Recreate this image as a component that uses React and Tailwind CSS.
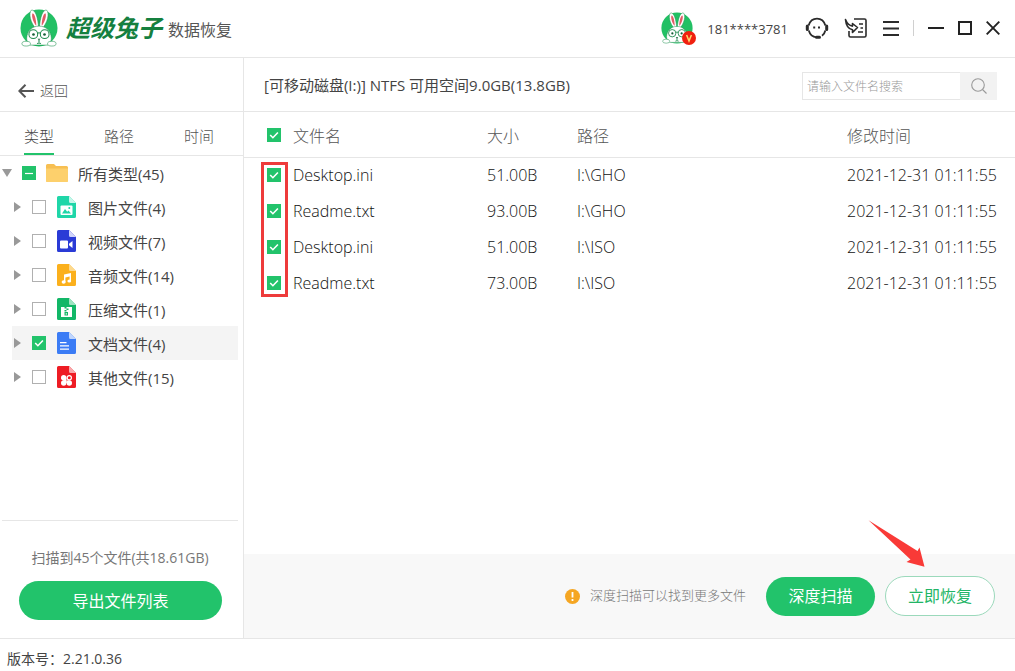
import { useEffect, useRef, useState } from "react";

const TYPES = [
  { id: "image", label: "图片文件(4)", color: "#1fd6a8", fold: "#c5f7ea" },
  { id: "video", label: "视频文件(7)", color: "#2a3bd6", fold: "#d0d4fa" },
  { id: "audio", label: "音频文件(14)", color: "#fbb01c", fold: "#fdd98d" },
  { id: "zip", label: "压缩文件(1)", color: "#12b767", fold: "#9fe3c1" },
  { id: "doc", label: "文档文件(4)", color: "#3b7cf5", fold: "#c0d6fd", checked: true },
  { id: "other", label: "其他文件(15)", color: "#ee1c24", fold: "#f9a9ac" },
];

const FILES = [
  { name: "Desktop.ini", size: "51.00B", path: "I:\\GHO", time: "2021-12-31 01:11:55" },
  { name: "Readme.txt", size: "93.00B", path: "I:\\GHO", time: "2021-12-31 01:11:55" },
  { name: "Desktop.ini", size: "51.00B", path: "I:\\ISO", time: "2021-12-31 01:11:55" },
  { name: "Readme.txt", size: "73.00B", path: "I:\\ISO", time: "2021-12-31 01:11:55" },
];

function Checkbox({ id, label, defaultChecked = false, mixed = false }) {
  const ref = useRef(null);
  useEffect(() => {
    if (ref.current) ref.current.indeterminate = mixed;
  }, [mixed]);
  return (
    <span className="grid size-[14px] shrink-0">
      <input
        ref={ref}
        id={id}
        type="checkbox"
        aria-label={label}
        defaultChecked={defaultChecked}
        className="peer col-start-1 row-start-1 m-0 size-[14px] appearance-none border border-[#b0b0b0] bg-white checked:border-[#22c36b] checked:bg-[#22c36b] indeterminate:border-[#22c36b] indeterminate:bg-[#22c36b]"
      />
      <svg
        viewBox="0 0 14 14"
        fill="none"
        stroke="#fff"
        strokeWidth="1.6"
        className={
          mixed
            ? "pointer-events-none col-start-1 row-start-1 size-[14px]"
            : "pointer-events-none invisible col-start-1 row-start-1 size-[14px] peer-checked:visible"
        }
      >
        {mixed ? <path d="M3 7.5h8" strokeWidth="1.2" /> : <path d="M3.2 7l2.7 2.7 5-5.2" />}
      </svg>
    </span>
  );
}

function Rabbit({ className }) {
  return (
    <svg viewBox="0 0 40 40" className={className} aria-hidden="true">
      <circle cx="20" cy="20" r="19.500" fill="#22c064" />
      <g stroke="#1a8f4c" strokeWidth=".6" fill="#fff">
        <path d="M17 21C11 15 8.500 4 12 1.200C16 .2 19 9 19.600 20z" />
        <path d="M23 21c6-6 8.500-17 5-19.800C24 .2 21 9 20.400 20z" />
        <path d="M20 18c8 0 12.500 5.500 13 12.500.2 3-1 5-3.500 7.500h-19C8 35.500 6.800 33.500 7 30.500 7.500 23.500 12 18 20 18z" />
        <ellipse cx="6.500" cy="36.500" rx="4.500" ry="2.500" />
        <ellipse cx="33.500" cy="36.500" rx="4.500" ry="2.500" />
      </g>
      <path d="M16.500 17C13 12 12 6 13.300 4.500 15.500 5 17 11 17.200 17zM23.500 17C27 12 28 6 26.700 4.500 24.500 5 23 11 22.800 17z" fill="#e25b66" />
      <g fill="none" stroke="#1f8b4d" strokeWidth="1.100">
        <circle cx="14" cy="26.500" r="4.600" />
        <circle cx="26" cy="26.500" r="4.600" />
        <path d="M18.600 25.500q1.400-1 2.800 0M20 32.500v2.500M18 36.500q2-1.500 4 0" />
      </g>
      <g fill="#175f37">
        <circle cx="14.200" cy="26.800" r="1.400" />
        <circle cx="25.800" cy="26.800" r="1.400" />
        <path d="M18.500 31.300h3L20 33z" />
      </g>
    </svg>
  );
}

function FileIcon({ type }) {
  return (
    <svg viewBox="0 0 19 22" className="h-[22px] w-[19px] shrink-0" aria-hidden="true">
      <path d="M1.500 0H12l7 7v13.500a1.500 1.500 0 0 1-1.500 1.500h-16A1.500 1.500 0 0 1 0 20.500v-19A1.500 1.500 0 0 1 1.500 0z" fill={type.color} />
      <path d="M12 0l7 7h-5.500A1.500 1.500 0 0 1 12 5.500z" fill={type.fold} />
      {type.id === "image" && (
        <>
          <rect x="3.500" y="9.500" width="12" height="9.500" rx="1" fill="#fff" />
          <path d="M5 17.500l3-4.500 2.200 2.800 1.300-1.300 2.500 3z" fill={type.color} />
          <circle cx="12.300" cy="12" r="1" fill={type.color} />
        </>
      )}
      {type.id === "video" && (
        <path d="M4 10.500h6a1 1 0 0 1 1 1v6a1 1 0 0 1-1 1H4a1 1 0 0 1-1-1v-6a1 1 0 0 1 1-1zM12 13.700l3.500-2.700v7L12 15.300z" fill="#fff" />
      )}
      {type.id === "audio" && (
        <g fill="#fff">
          <path d="M7 10.600l7-1.600v8h-1.400v-4.400l-4.200 1v5H7z" />
          <ellipse cx="6.600" cy="18" rx="2" ry="1.700" />
          <ellipse cx="12.300" cy="17" rx="1.900" ry="1.600" />
        </g>
      )}
      {type.id === "zip" && (
        <>
          <path d="M4 9h11v10H4z" fill="#fff" />
          <path d="M7.500 9h2v1.500h-2zM9.500 10.500h2V12h-2zM7.500 12h2v1.500h-2zM7.500 14h3.500v3.500H7.500z" fill={type.color} />
          <path d="M8.700 15.200h1.200v1.200H8.700z" fill="#fff" />
        </>
      )}
      {type.id === "doc" && <path d="M3 10.700h6.500M3 13.900h9M3 17.100h9" stroke="#fff" strokeWidth="1.300" />}
      {type.id === "other" && (
        <g fill="#fff">
          <circle cx="6.700" cy="11.800" r="2.700" />
          <circle cx="6.700" cy="17" r="2.700" />
          <circle cx="12.300" cy="17" r="2.700" />
          <path d="M6.500 11.500h2.900v2.900H6.500zM6.500 14.400h2.900v2.600H6.500zM9.600 14.400h2.900v2.600H9.600z" />
          <circle cx="12.300" cy="11.700" r="2.100" fill="none" stroke="#fff" strokeWidth="1.200" />
        </g>
      )}
    </svg>
  );
}

function Header() {
  return (
    <header className="flex h-[58px] shrink-0 items-center border-b border-[#e6e6e6] pr-[15px] pb-[2px] pl-5">
      <Rabbit className="size-[38px]" />
      <h1 className="ml-2 flex items-center">
        <span className="text-[24px] font-bold text-[#15803f] italic">超级兔子</span>
        <span className="ml-[6px] pt-1 text-[16px] font-normal text-[#555]">数据恢复</span>
      </h1>
      <div className="ml-auto flex items-center">
        <div className="relative mr-[14px]">
          <Rabbit className="size-[32px]" />
          <svg viewBox="0 0 14 14" className="absolute top-[19px] left-[21px] size-[14px]" aria-label="VIP">
            <circle cx="7" cy="7" r="7" fill="#f0200f" />
            <path d="M4.600 4l2.400 6 2.400-6" fill="none" stroke="#ffd76a" strokeWidth="1.500" />
          </svg>
        </div>
        <span className="mr-[17px] pt-[4px] text-[13px] font-normal text-[#444]">181****3781</span>
        <button type="button" aria-label="客服" className="mr-[15px]">
          <svg viewBox="0 0 24 24" className="size-6" fill="none" stroke="#2b2b2b" strokeWidth="1.800">
            <path d="M3.600 9.500C5 5 8 2.700 12 2.700S19 5 20.400 9.500M3.800 14.500C5 18.800 7.500 21 11.500 21.300M20.300 14.500C19.800 17 18.500 18.800 17 19.800" />
            <path d="M2.300 10v3.500M21.700 10v3.500M11.500 21.300h3" strokeWidth="3" strokeLinecap="round" />
            <path d="M8.200 11.500h2M13 11.500h2" strokeWidth="2.200" />
          </svg>
        </button>
        <button type="button" aria-label="反馈" className="mr-[15px]">
          <svg viewBox="0 0 24 24" className="size-6" fill="none" stroke="#2b2b2b" strokeWidth="1.600" strokeLinejoin="round">
            <path d="M10 3h10.500A1.500 1.500 0 0 1 22 4.500v15a1.500 1.500 0 0 1-1.500 1.500H6.500A1.500 1.500 0 0 1 5 19.500V15" />
            <path d="M1.500 3.500c.5 6 2.500 9.500 7 10.300V16.500l5-5-5-4v2.600C5 9.500 3 7.500 1.500 3.500z" />
            <path d="M15 8h4M16.500 12H19M14 16h5" />
          </svg>
        </button>
        <button type="button" aria-label="菜单" className="mr-[14px]">
          <svg viewBox="0 0 16 16" className="size-4" stroke="#2b2b2b" strokeWidth="1.800">
            <path d="M0 2h16M0 8.500h16M0 15h16" />
          </svg>
        </button>
        <span className="mr-[14px] h-4 w-px bg-[#d0d0d0]" />
        <button type="button" aria-label="最小化" className="mr-[14px]">
          <svg viewBox="0 0 16 16" className="size-4" stroke="#222" strokeWidth="2">
            <path d="M0 8h16" />
          </svg>
        </button>
        <button type="button" aria-label="最大化" className="mr-[14px]">
          <svg viewBox="0 0 14 14" className="size-[14px]" fill="none" stroke="#222" strokeWidth="2">
            <path d="M1 1h12v12H1z" />
          </svg>
        </button>
        <button type="button" aria-label="关闭">
          <svg viewBox="0 0 14 14" className="size-[14px]" stroke="#222" strokeWidth="1.900">
            <path d="M.7.700l12.600 12.600M13.300.7L.7 13.300" />
          </svg>
        </button>
      </div>
    </header>
  );
}

function Sidebar() {
  const [tab, setTab] = useState("类型");
  return (
    <aside className="flex w-[244px] shrink-0 flex-col border-r border-[#e6e6e6]">
      <div className="flex h-[54px] items-center border-b border-[#e6e6e6] pt-3 pl-[18px]">
        <button type="button" className="flex items-center gap-[6px] text-[14px] text-[#555]">
          <svg viewBox="0 0 16 14" className="h-[14px] w-4" fill="none" stroke="#555" strokeWidth="2">
            <path d="M16 7H1.500M7.500.7L1.300 7l6.200 6.300" />
          </svg>
          返回
        </button>
      </div>
      <div role="tablist" className="flex h-[44px] gap-[50px] border-b border-[#e6e6e6] pl-6">
        {["类型", "路径", "时间"].map((name) => (
          <button
            key={name}
            type="button"
            role="tab"
            aria-selected={tab === name}
            onClick={() => setTab(name)}
            className={
              tab === name
                ? "border-b-2 border-[#22c36b] pt-[7px] text-[15px] text-[#444]"
                : "border-b-2 border-transparent pt-[7px] text-[15px] text-[#555]"
            }
          >
            {name}
          </button>
        ))}
      </div>
      <div className="text-[15px] font-normal text-[#444]">
        <div className="flex h-[34px] items-center pl-[2px]">
          <svg viewBox="0 0 10 8" className="mr-[10px] h-2 w-[10px]" fill="#999" aria-hidden="true">
            <path d="M0 0h10L5 8z" />
          </svg>
          <Checkbox id="type-all" mixed />
          <svg viewBox="0 0 22 18" className="mr-[10px] ml-[10px] h-[18px] w-[22px]" aria-hidden="true">
            <path d="M1.500 0H8l2 2h10.500A1.500 1.500 0 0 1 22 3.500v13a1.500 1.500 0 0 1-1.500 1.500h-19A1.500 1.500 0 0 1 0 16.500v-15A1.500 1.500 0 0 1 1.500 0z" fill="#f7bf52" />
            <path d="M0 4.500h22v12a1.500 1.500 0 0 1-1.500 1.500h-19A1.500 1.500 0 0 1 0 16.500z" fill="#fdd06c" />
          </svg>
          <label htmlFor="type-all" className="pt-[2px]">
            所有类型(45)
          </label>
        </div>
        <ul className="mr-[5px] ml-3">
          {TYPES.map((t) => (
            <li key={t.id} className={t.checked ? "flex h-[34px] items-center bg-[#f4f4f4] pl-[2px]" : "flex h-[34px] items-center pl-[2px]"}>
              <svg viewBox="0 0 7 10" className="mr-[11px] h-[10px] w-[7px]" fill="#999" aria-hidden="true">
                <path d="M0 0l7 5-7 5z" />
              </svg>
              <Checkbox id={"type-" + t.id} defaultChecked={Boolean(t.checked)} />
              <span className="mr-3 ml-[11px]">
                <FileIcon type={t} />
              </span>
              <label htmlFor={"type-" + t.id} className="pt-[2px]">
                {t.label}
              </label>
            </li>
          ))}
        </ul>
      </div>
      <div className="mt-auto mr-[5px] ml-[2px] border-t border-[#e6e6e6] pt-[25px] pb-[18px]">
        <p className="text-center text-[14px] leading-6 font-normal text-[#777]">扫描到45个文件(共18.61GB)</p>
        <div className="mt-[11px] pr-4 pl-[17px]">
          <button type="button" className="h-[39px] w-full rounded-full bg-[#22c36b] text-[16px] font-normal text-white">
            导出文件列表
          </button>
        </div>
      </div>
    </aside>
  );
}

function FileTable() {
  return (
    <div className="relative">
      <table className="w-full table-fixed border-collapse text-left">
        <colgroup>
          <col className="w-[49px]" />
          <col className="w-[194px]" />
          <col className="w-[90px]" />
          <col />
          <col className="w-[168px]" />
        </colgroup>
        <thead className="text-[16px] text-[#555]">
          <tr className="h-[45px] border-b border-[#e6e6e6]">
            <th className="pt-px pl-[23px] font-light">
              <Checkbox label="全选" defaultChecked />
            </th>
            <th className="pt-[3px] font-light">文件名</th>
            <th className="pt-[3px] font-light">大小</th>
            <th className="pt-[3px] font-light">路径</th>
            <th className="pt-[3px] font-light">修改时间</th>
          </tr>
        </thead>
        <tbody className="text-[16px] text-[#111]">
          {FILES.map((f, i) => (
            <tr key={i} className="h-9">
              <td className="pl-[23px]">
                <Checkbox label={f.name} defaultChecked />
              </td>
              <td>{f.name}</td>
              <td>{f.size}</td>
              <td>{f.path}</td>
              <td className="whitespace-nowrap">{f.time}</td>
            </tr>
          ))}
        </tbody>
      </table>
      <div className="pointer-events-none absolute top-[50px] left-[17px] h-[135px] w-[27px] border-3 border-[#ee3b3b]" />
    </div>
  );
}

export default function App() {
  return (
    <div className="flex min-h-screen flex-col bg-white font-['Open_Sans','Noto_Sans_CJK_SC',sans-serif] font-light">
      <Header />
      <div className="flex flex-1">
        <Sidebar />
        <main className="flex min-w-0 flex-1 flex-col">
          <div className="flex h-[54px] shrink-0 items-center justify-between border-b border-[#e6e6e6] pt-[2px] pr-[18px] pl-5">
            <h2 className="text-[15px] font-normal text-[#444]">[可移动磁盘(I:)] NTFS 可用空间9.0GB(13.8GB)</h2>
            <form className="flex h-7 w-[195px]" onSubmit={(e) => e.preventDefault()}>
              <input
                type="text"
                aria-label="搜索文件"
                placeholder="请输入文件名搜索"
                className="min-w-0 flex-1 border border-r-0 border-[#e6e6e6] px-1 pt-[3px] text-[12px] outline-none placeholder:text-[#999]"
              />
              <button type="submit" aria-label="搜索" className="flex w-[37px] items-center justify-center bg-[#f2f2f2]">
                <svg viewBox="0 0 16 16" className="size-4" fill="none" stroke="#999" strokeWidth="1.100">
                  <circle cx="7" cy="7" r="6.300" />
                  <path d="M11.500 11.500l4 4" />
                </svg>
              </button>
            </form>
          </div>
          <FileTable />
          <div className="relative mt-auto flex h-[84px] shrink-0 items-center justify-end bg-[#f8f8f8] pr-5">
            <svg viewBox="0 0 15 15" className="mr-[10px] size-[15px]" aria-hidden="true">
              <circle cx="7.500" cy="7.500" r="7.500" fill="#f5a623" />
              <path d="M7.500 3v5.500M7.500 10v2" stroke="#fff" strokeWidth="1.800" />
            </svg>
            <span className="mr-5 text-[13px] text-[#777]">深度扫描可以找到更多文件</span>
            <button type="button" className="mr-[10px] h-[39px] w-[109px] rounded-full bg-[#22c36b] text-[16px] font-normal text-white">
              深度扫描
            </button>
            <button type="button" className="h-10 w-[110px] rounded-full border border-[#9bd9bb] bg-white text-[16px] font-normal text-[#22b566]">
              立即恢复
            </button>
            <svg viewBox="0 0 58 48" className="pointer-events-none absolute -top-[34px] right-[89px] h-12 w-[58px]" aria-hidden="true">
              <path d="M.5.300L49.500 31l2-3.500L56.500 46.800 38.500 42l4-2.500z" fill="#f93a37" />
            </svg>
          </div>
        </main>
      </div>
      <footer className="flex h-[33px] shrink-0 items-center border-t border-[#e6e6e6] pt-[6px] pl-[7px] text-[14px] font-normal text-[#444]">
        版本号：2.21.0.36
      </footer>
    </div>
  );
}
